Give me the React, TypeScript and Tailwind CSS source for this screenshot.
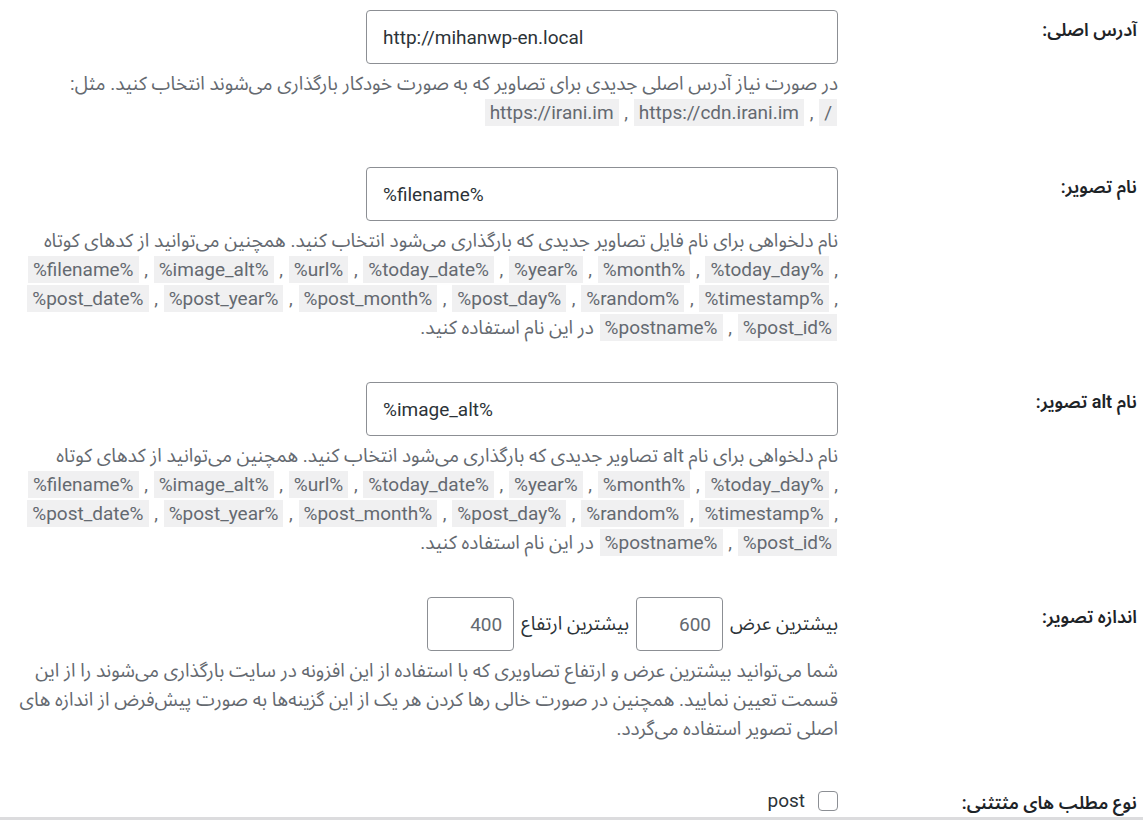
const Chip = ({ children }: { children: string }) => (
  <code className="mx-[1px] bg-[#f0f0f1] px-[5px] py-[2px] font-[Roboto,'Noto_Sans_Arabic','DejaVu_Sans',sans-serif] text-[19px]">
    {children}
  </code>
);

const ChipLine = ({ items, trailing }: { items: string[]; trailing?: boolean }) => (
  <div dir="ltr" className="whitespace-nowrap text-right">
    {items.map((it, i) => (
      <span key={it}>
        <Chip>{it}</Chip>
        {i < items.length - 1 || trailing ? " , " : ""}
      </span>
    ))}
  </div>
);

function Row({
  label,
  children,
  className = "pb-[40px]",
}: {
  label: string;
  children: React.ReactNode;
  className?: string;
}) {
  return (
    <div className={`grid grid-cols-[305px_1fr] ${className}`}>
      <div className="pr-[6px] pt-[8px] text-[18px] font-semibold leading-[24px] text-[#1d2327]">{label}</div>
      <div className="min-w-0">{children}</div>
    </div>
  );
}

const Desc = ({ children }: { children: React.ReactNode }) => (
  <div className="mt-[5px] whitespace-nowrap text-[19px] leading-[29px] text-[#646970]">{children}</div>
);

const TextInput = ({ value }: { value: string }) => (
  <input
    dir="ltr"
    defaultValue={value}
    className="h-[54px] w-[472px] rounded-[4px] border border-[#8c8f94] bg-white px-[16px] text-[19px] text-[#2c3338] outline-none"
  />
);

const shortcodes1 = ["%filename%", "%image_alt%", "%url%", "%today_date%", "%year%", "%month%", "%today_day%"];
const shortcodes2 = ["%post_date%", "%post_year%", "%post_month%", "%post_day%", "%random%", "%timestamp%"];

function ShortcodeDesc({ lead }: { lead: React.ReactNode }) {
  return (
    <Desc>
      <div>{lead}</div>
      <ChipLine items={shortcodes1} trailing />
      <ChipLine items={shortcodes2} trailing />
      <div>
        <span dir="ltr">
          <Chip>%postname%</Chip> , <Chip>%post_id%</Chip>
        </span>{" "}
        در این نام استفاده کنید.
      </div>
    </Desc>
  );
}

export default function App() {
  return (
    <div
      dir="rtl"
      className="flex h-[823px] w-[1143px] flex-col overflow-hidden bg-white pt-[10px] font-[Roboto,'Noto_Sans_Arabic','DejaVu_Sans',sans-serif]"
    >
      <Row label="آدرس اصلی:">
        <TextInput value="http://mihanwp-en.local" />
        <Desc>
          <div>در صورت نیاز آدرس اصلی جدیدی برای تصاویر که به صورت خودکار بارگذاری می‌شوند انتخاب کنید. مثل:</div>
          <div dir="ltr" className="text-right">
            <Chip>https://irani.im</Chip> , <Chip>https://cdn.irani.im</Chip> , <Chip>/</Chip>
          </div>
        </Desc>
      </Row>

      <Row label="نام تصویر:">
        <TextInput value="%filename%" />
        <ShortcodeDesc lead="نام دلخواهی برای نام فایل تصاویر جدیدی که بارگذاری می‌شود انتخاب کنید. همچنین می‌توانید از کدهای کوتاه" />
      </Row>

      <Row label="نام alt تصویر:">
        <TextInput value="%image_alt%" />
        <ShortcodeDesc lead="نام دلخواهی برای نام alt تصاویر جدیدی که بارگذاری می‌شود انتخاب کنید. همچنین می‌توانید از کدهای کوتاه" />
      </Row>

      <Row label="اندازه تصویر:">
        <div className="flex items-center gap-[7px] text-[19px] text-[#2c3338]">
          <span>بیشترین عرض</span>
          <input
            placeholder="600"
            className="h-[54px] w-[87px] rounded-[4px] border border-[#8c8f94] px-[11px] text-[19px] outline-none placeholder:text-[#646970]"
          />
          <span>بیشترین ارتفاع</span>
          <input
            placeholder="400"
            className="h-[54px] w-[87px] rounded-[4px] border border-[#8c8f94] px-[11px] text-[19px] outline-none placeholder:text-[#646970]"
          />
        </div>
        <Desc>
          <div>شما می‌توانید بیشترین عرض و ارتفاع تصاویری که با استفاده از این افزونه در سایت بارگذاری می‌شوند را از این</div>
          <div>قسمت تعیین نمایید. همچنین در صورت خالی رها کردن هر یک از این گزینه‌ها به صورت پیش‌فرض از اندازه های</div>
          <div>اصلی تصویر استفاده می‌گردد.</div>
        </Desc>
      </Row>

      <Row label="نوع مطلب های مثتثنی:" className="h-[34px] shrink-0">
        <label className="flex items-center gap-[13px] pt-[8px] text-[19px] leading-[20px] text-[#2c3338]">
          <span className="h-[20px] w-[20px] rounded-[4px] border border-[#8c8f94] bg-white" />
          <span>post</span>
        </label>
      </Row>
      <div className="h-[3px] w-full shrink-0 bg-[#dcdcde]" />
    </div>
  );
}
